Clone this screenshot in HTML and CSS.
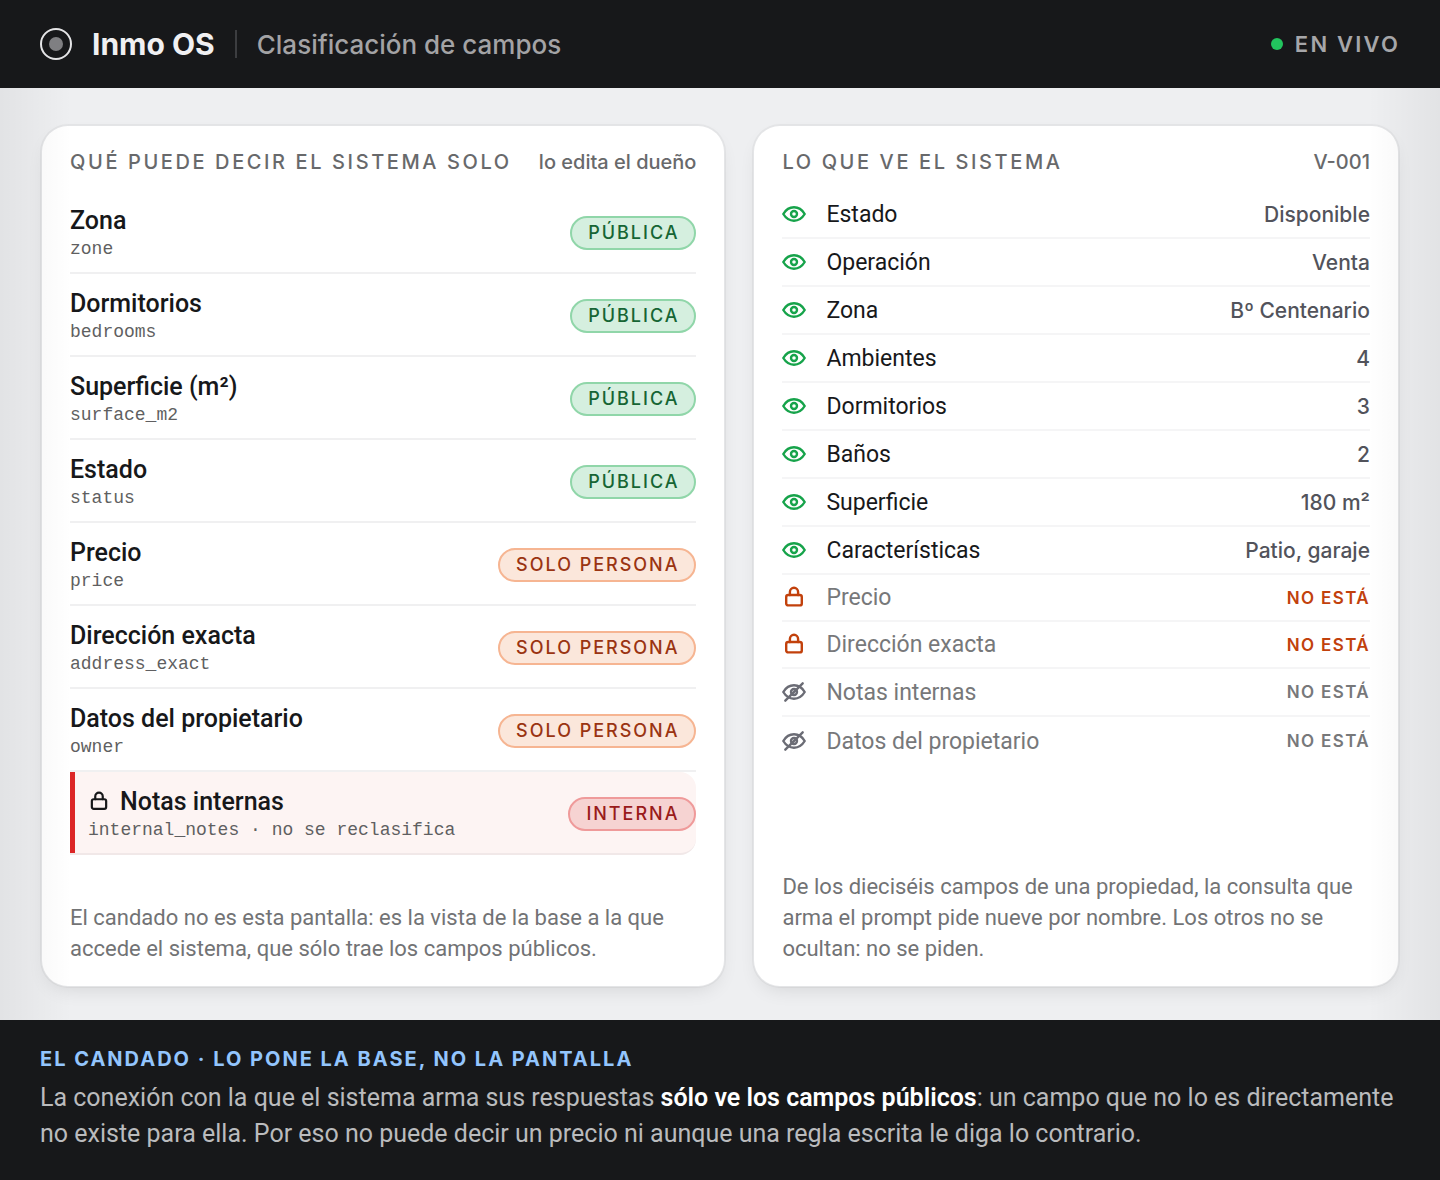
FILE: index.html
```
<!DOCTYPE html>
<html lang="es">
<head>
  <meta charset="UTF-8">
  <meta name="viewport" content="width=device-width, initial-scale=1">
  <title>Inmo OS - Clasificación de campos</title>
  <link rel="stylesheet" href="styles.css">
</head>
<body>
  <svg class="sprite" aria-hidden="true">
    <symbol id="eye" viewBox="0 0 24 24">
      <path d="M1.3 12C3.8 7.8 7.5 5.3 12 5.3S20.2 7.8 22.7 12C20.2 16.2 16.5 18.7 12 18.7S3.8 16.2 1.3 12Z"/>
      <circle cx="12" cy="12" r="3"/>
    </symbol>
    <symbol id="eye-off" viewBox="0 0 24 24">
      <path d="M1.3 12C3.8 7.8 7.5 5.3 12 5.3S20.2 7.8 22.7 12C20.2 16.2 16.5 18.7 12 18.7S3.8 16.2 1.3 12Z"/>
      <circle cx="12" cy="12" r="3"/>
      <path d="M3.3 20.7L20.7 3.3"/>
    </symbol>
    <symbol id="lock" viewBox="0 0 24 24">
      <rect x="4.2" y="9" width="15.6" height="10.4" rx="2"/>
      <path d="M7.9 9V5.9a4.1 4.1 0 0 1 8.2 0V9"/>
    </symbol>
  </svg>

  <header class="topbar">
    <span class="logo"></span>
    <strong class="brand">Inmo OS</strong>
    <span class="divider"></span>
    <h1 class="page-title">Clasificación de campos</h1>
    <span class="live">EN VIVO</span>
  </header>

  <main class="content">
    <section class="card">
      <div class="card-head">
        <h2>QUÉ PUEDE DECIR EL SISTEMA SOLO</h2>
        <span class="hint">lo edita el dueño</span>
      </div>
      <ul class="fields">
        <li>
          <div><div class="name">Zona</div><code>zone</code></div>
          <span class="badge public">PÚBLICA</span>
        </li>
        <li>
          <div><div class="name">Dormitorios</div><code>bedrooms</code></div>
          <span class="badge public">PÚBLICA</span>
        </li>
        <li>
          <div><div class="name">Superficie (m²)</div><code>surface_m2</code></div>
          <span class="badge public">PÚBLICA</span>
        </li>
        <li>
          <div><div class="name">Estado</div><code>status</code></div>
          <span class="badge public">PÚBLICA</span>
        </li>
        <li>
          <div><div class="name">Precio</div><code>price</code></div>
          <span class="badge person">SOLO PERSONA</span>
        </li>
        <li>
          <div><div class="name">Dirección exacta</div><code>address_exact</code></div>
          <span class="badge person">SOLO PERSONA</span>
        </li>
        <li>
          <div><div class="name">Datos del propietario</div><code>owner</code></div>
          <span class="badge person">SOLO PERSONA</span>
        </li>
        <li class="locked">
          <div>
            <div class="name"><svg class="icon small"><use href="#lock"/></svg>Notas internas</div>
            <code>internal_notes · no se reclasifica</code>
          </div>
          <span class="badge internal">INTERNA</span>
        </li>
      </ul>
      <p class="note">El candado no es esta pantalla: es la vista de la base a la que accede el sistema, que sólo trae los campos públicos.</p>
    </section>

    <section class="card">
      <div class="card-head">
        <h2>LO QUE VE EL SISTEMA</h2>
        <span class="hint">V-001</span>
      </div>
      <ul class="view">
        <li><svg class="icon"><use href="#eye"/></svg><span>Estado</span><span class="value">Disponible</span></li>
        <li><svg class="icon"><use href="#eye"/></svg><span>Operación</span><span class="value">Venta</span></li>
        <li><svg class="icon"><use href="#eye"/></svg><span>Zona</span><span class="value">Bº Centenario</span></li>
        <li><svg class="icon"><use href="#eye"/></svg><span>Ambientes</span><span class="value">4</span></li>
        <li><svg class="icon"><use href="#eye"/></svg><span>Dormitorios</span><span class="value">3</span></li>
        <li><svg class="icon"><use href="#eye"/></svg><span>Baños</span><span class="value">2</span></li>
        <li><svg class="icon"><use href="#eye"/></svg><span>Superficie</span><span class="value">180 m²</span></li>
        <li><svg class="icon"><use href="#eye"/></svg><span>Características</span><span class="value">Patio, garaje</span></li>
        <li class="absent blocked"><svg class="icon"><use href="#lock"/></svg><span>Precio</span><span class="value">NO ESTÁ</span></li>
        <li class="absent blocked"><svg class="icon"><use href="#lock"/></svg><span>Dirección exacta</span><span class="value">NO ESTÁ</span></li>
        <li class="absent"><svg class="icon"><use href="#eye-off"/></svg><span>Notas internas</span><span class="value">NO ESTÁ</span></li>
        <li class="absent"><svg class="icon"><use href="#eye-off"/></svg><span>Datos del propietario</span><span class="value">NO ESTÁ</span></li>
      </ul>
      <p class="note">De los dieciséis campos de una propiedad, la consulta que arma el prompt pide nueve por nombre. Los otros no se ocultan: no se piden.</p>
    </section>
  </main>

  <footer class="caption">
    <h2>EL CANDADO · LO PONE LA BASE, NO LA PANTALLA</h2>
    <p>La conexión con la que el sistema arma sus respuestas <strong>sólo ve los campos públicos</strong>: un campo que no lo es directamente no existe para ella. Por eso no puede decir un precio ni aunque una regla escrita le diga lo contrario.</p>
  </footer>
</body>
</html>
```
FILE: styles.css
```
* {
  box-sizing: border-box;
  margin: 0;
  padding: 0;
}
body {
  display: flex;
  flex-direction: column;
  min-height: 100vh;
  font-family: Roboto, "Liberation Sans", sans-serif;
  color: #17181a;
  background: #eeeff1;
}
ul {
  list-style: none;
}
.sprite {
  display: none;
}
.icon {
  flex: none;
  width: 24px;
  height: 24px;
  fill: none;
  stroke: currentColor;
  stroke-width: 2.4;
  stroke-linecap: round;
  stroke-linejoin: round;
}
.icon.small {
  width: 22px;
  height: 22px;
}

/* top bar */
.topbar {
  display: flex;
  align-items: center;
  gap: 20px;
  height: 88px;
  padding: 0 40px;
  background: #17181a;
  font-family: Inter, sans-serif;
}
.logo {
  display: flex;
  align-items: center;
  justify-content: center;
  width: 32px;
  height: 32px;
  border: 2px solid #e4e4e6;
  border-radius: 50%;
}
.logo::before {
  content: "";
  width: 14px;
  height: 14px;
  border-radius: 50%;
  background: #7f7f82;
}
.brand {
  font-size: 30px;
  font-weight: 700;
  color: #f0f0f2;
}
.divider {
  width: 2px;
  height: 28px;
  background: #3c3d40;
}
.page-title {
  font-size: 26px;
  font-weight: 500;
  color: #a3a3a5;
}
.live {
  display: flex;
  align-items: center;
  gap: 12px;
  margin-left: auto;
  font-size: 22px;
  font-weight: 600;
  letter-spacing: 0.1em;
  color: #a6a6a9;
}
.live::before {
  content: "";
  width: 12px;
  height: 12px;
  border-radius: 50%;
  background: #22c55e;
}

/* cards */
.content {
  position: relative;
  flex: 1;
  display: grid;
  grid-template-columns: 1.06fr 1fr;
  gap: 26px;
  padding: 36px 40px 32px;
}
.content::after {
  content: "";
  position: absolute;
  inset: 0;
  pointer-events: none;
  background: linear-gradient(90deg, rgba(0, 0, 0, 0.05), transparent 72px, transparent calc(100% - 72px), rgba(0, 0, 0, 0.05));
}
.card {
  display: flex;
  flex-direction: column;
  padding: 22px 28px;
  background: #fff;
  background-clip: padding-box;
  border: 2px solid rgba(0, 0, 0, 0.04);
  border-radius: 28px;
  box-shadow: 0 8px 20px -8px rgba(0, 0, 0, 0.12);
}
.card-head {
  display: flex;
  align-items: center;
  justify-content: space-between;
  margin-bottom: 15px;
  font-family: Inter, sans-serif;
  line-height: 28px;
  white-space: nowrap;
  color: #68696b;
}
.card-head h2 {
  font-size: 20px;
  font-weight: 500;
  letter-spacing: 0.13em;
}
.hint {
  font-size: 20px;
  font-weight: 500;
}
.note {
  margin-top: auto;
  font-size: 22px;
  line-height: 31px;
  color: #727375;
}

/* left list */
.fields li {
  display: flex;
  align-items: center;
  justify-content: space-between;
  padding: 14px 0 11px;
  border-bottom: 2px solid #f0f0f1;
}
.fields .locked {
  padding-left: 18px;
  background: #fdf4f3;
  border-bottom-color: #f1e8e8;
  border-radius: 0 16px 16px 0;
  box-shadow: inset 5px 0 #dc2626;
}
.name {
  display: flex;
  align-items: center;
  gap: 10px;
  font-size: 25px;
  font-weight: 500;
  line-height: 32px;
}
.fields code {
  display: block;
  font-family: "Liberation Mono", monospace;
  font-size: 18px;
  line-height: 24px;
  color: #5f5f61;
}
.badge {
  padding: 0 15px 0 16px;
  font-family: Inter, sans-serif;
  font-size: 18px;
  font-weight: 500;
  line-height: 30px;
  letter-spacing: 0.11em;
  border: 2px solid;
  border-radius: 17px;
}
.public {
  color: #166534;
  background: #d5efdf;
  border-color: #90d6a9;
}
.person {
  color: #9a3412;
  background: #fbe7db;
  border-color: #f6b592;
}
.internal {
  color: #991b1b;
  background: #f6d3d2;
  border-color: #ef9a9a;
}

/* right list */
.view li {
  display: flex;
  align-items: center;
  gap: 20px;
  height: 48px;
  font-size: 23px;
  border-bottom: 2px solid #f5f5f6;
}
.view li:last-child {
  border-bottom: 0;
}
.view .icon {
  color: #16a34a;
}
.value {
  margin-left: auto;
  font-family: Inter, sans-serif;
  font-size: 21px;
  font-weight: 500;
  color: #52535b;
}
.view .absent {
  color: #77787a;
}
.absent .icon {
  color: #6b6c75;
}
.absent .value {
  font-size: 17px;
  font-weight: 600;
  letter-spacing: 0.08em;
  color: #77787a;
}
.view .blocked {
  height: 47px;
}
.blocked .icon,
.blocked .value {
  color: #c2410c;
}

/* bottom caption */
.caption {
  padding: 24px 40px 28px;
  background: #17181a;
}
.caption h2 {
  margin-bottom: 6px;
  font-family: Inter, sans-serif;
  font-size: 20px;
  font-weight: 700;
  line-height: 30px;
  letter-spacing: 0.1em;
  color: #93c5fd;
}
.caption p {
  font-size: 25px;
  line-height: 36px;
  color: #babbbd;
}
.caption strong {
  font-weight: 600;
  color: #fff;
}
```
